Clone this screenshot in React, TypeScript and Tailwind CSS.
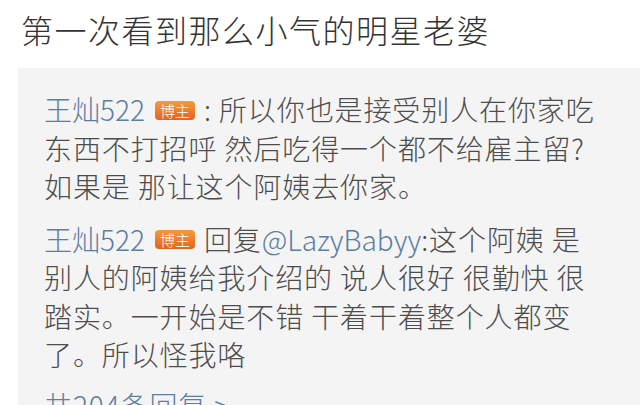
const cjk = "font-['Noto_Sans_CJK_SC','Noto_Sans',sans-serif]";

function Badge() {
  return (
    <span className="ml-[10px] mr-[9px] inline-flex h-[19px] w-[40px] translate-y-[-3px] items-center justify-center rounded-[4px] bg-gradient-to-b from-[#f39a3d] to-[#e1641c] align-middle text-[15px] leading-none tracking-normal text-white">
      博主
    </span>
  );
}

function Name() {
  return <span className="tracking-normal text-[#5d7e9f]">王灿522</span>;
}

export default function App() {
  return (
    <div className={`h-[405px] w-[640px] overflow-hidden bg-white ${cjk}`}>
      <h1 className="pl-[21px] pt-[7px] text-[32px] font-light leading-[44px] tracking-[1.5px] text-[#333]">
        第一次看到那么小气的明星老婆
      </h1>

      <div className="ml-[18px] mt-[17px] bg-[#f4f4f4] pl-[26px] pt-[22px] text-[28px] font-light leading-[38.5px] tracking-[0.9px] text-[#4d4d4d]">
        <div>
          <div className="whitespace-nowrap">
            <Name />
            <Badge />
            :&nbsp;所以你也是接受别人在你家吃
          </div>
          <div className="whitespace-nowrap">东西不打招呼 然后吃得一个都不给雇主留?</div>
          <div className="whitespace-nowrap">如果是 那让这个阿姨去你家。</div>
        </div>

        <div className="mt-[14px]">
          <div className="whitespace-nowrap">
            <Name />
            <Badge />
            回复<span className="tracking-normal text-[#5d7e9f]">@LazyBabyy</span>:这个阿姨 是
          </div>
          <div className="whitespace-nowrap">别人的阿姨给我介绍的 说人很好 很勤快 很</div>
          <div className="whitespace-nowrap">踏实。一开始是不错 干着干着整个人都变</div>
          <div className="whitespace-nowrap">了。所以怪我咯</div>
        </div>

        <div className="mt-[12px] whitespace-nowrap text-[#5d7e9f]">共204条回复 &gt;</div>
      </div>
    </div>
  );
}
